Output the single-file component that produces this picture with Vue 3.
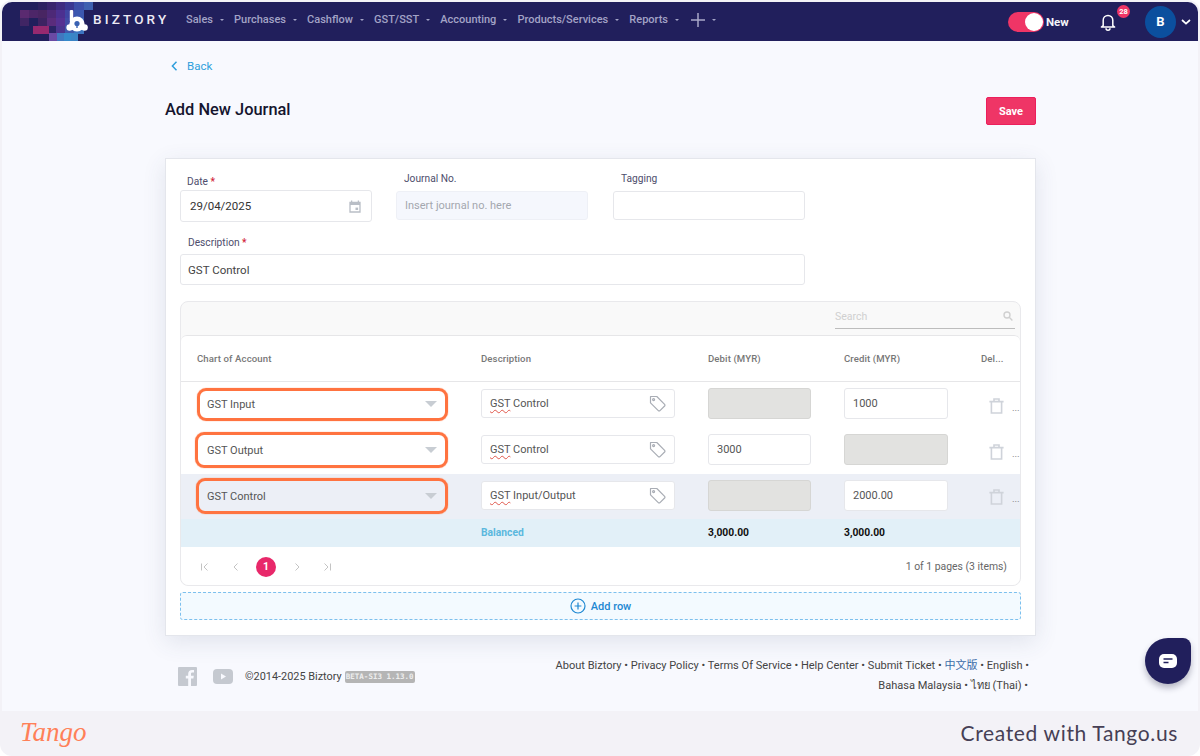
<script setup>
const navItems = ['Sales', 'Purchases', 'Cashflow', 'GST/SST', 'Accounting', 'Products/Services', 'Reports']

const rows = [
  { account: 'GST Input', rest: ' Control', debit: null, credit: '1000', frame: 'frame-a', tint: '' },
  { account: 'GST Output', rest: ' Control', debit: '3000', credit: null, frame: 'frame-b', tint: '' },
  { account: 'GST Control', rest: ' Input/Output', debit: null, credit: '2000.00', frame: 'frame-c', tint: 'row-tint' }
]

const tiles = [
  [38, 2, 9, '#2c2160'], [47, 2, 9, '#38246c'], [56, 2, 9, '#3e2b80'], [65, 2, 9, '#3a3792'], [74, 2, 10, '#3c4ea8'], [84, 2, 9, '#3f60b0'],
  [20, 10, 9, '#5a2a70'], [29, 10, 9, '#4d2668'], [38, 10, 9, '#482562'], [47, 10, 9, '#4d2977'], [56, 10, 9, '#4c3090'], [65, 10, 9, '#4045a2'], [74, 10, 10, '#3c58b0'],
  [20, 18, 9, '#402564'], [38, 18, 9, '#3d2362'], [47, 18, 9, '#5a2c7c'], [56, 18, 9, '#563193'], [65, 18, 9, '#424ca6'], [74, 18, 10, '#3b66b8'],
  [33, 26, 16, '#96296f'], [49, 26, 7, '#2a2466'], [56, 26, 9, '#4b358f'], [65, 26, 9, '#4059ad'], [74, 26, 10, '#3c74c0'],
  [49, 33, 8, '#6a4aa4'], [57, 33, 7, '#4078c0'], [64, 33, 7, '#3589ca'], [71, 33, 7, '#3a84c6']
]
</script>

<template>
  <div class="shot">
    <div class="screen">
      <header class="nav">
        <div class="brand">
          <svg class="mosaic" width="94" height="41" viewBox="0 0 94 41">
            <rect v-for="(t, i) in tiles" :key="i" :x="t[0]" :y="t[1]" :width="t[2]" height="8" :fill="t[3]" />
          </svg>
          <svg class="brand-mark" width="22" height="23" viewBox="0 0 22 23">
            <path d="M5.5 1.5 V11" stroke="#fff" stroke-width="3.4" stroke-linecap="round" fill="none" />
            <circle cx="11" cy="14" r="7.6" fill="#fff" />
            <circle cx="3.6" cy="17.5" r="3.2" fill="#fff" />
            <circle cx="18.6" cy="17.5" r="3.2" fill="#fff" />
            <circle cx="11" cy="13.5" r="2.6" fill="#3a62b2" />
            <path d="M11 13.5 V18" stroke="#3a62b2" stroke-width="1.4" />
          </svg>
          <span class="brand-name">BIZTORY</span>
        </div>
        <nav class="menu">
          <span v-for="item in navItems" :key="item" class="menu-item">{{ item }}<i class="caret"></i></span>
          <span class="menu-item menu-plus">
            <svg width="14" height="14" viewBox="0 0 14 14"><path d="M7 0 V14 M0 7 H14" stroke="#a9a9c9" stroke-width="1.5" /></svg>
            <i class="caret"></i>
          </span>
        </nav>
        <div class="nav-right">
          <div class="toggle"><span class="knob"></span></div>
          <span class="new">New</span>
          <div class="bell">
            <svg width="16" height="18" viewBox="0 0 16 18" fill="none" stroke="#fff" stroke-width="1.5" stroke-linejoin="round">
              <path d="M3.2 12.6 V7.2 a4.8 4.8 0 0 1 9.6 0 V12.6 L14.6 14 H1.4 Z" />
              <path d="M6 15.2 a2 2 0 0 0 4 0" />
            </svg>
            <span class="badge">28</span>
          </div>
          <div class="avatar">B</div>
          <svg class="chev" width="10" height="6" viewBox="0 0 10 6"><path d="M1 1 L5 4.6 L9 1" fill="none" stroke="#fff" stroke-width="1.7" /></svg>
        </div>
      </header>

      <main class="page">
        <a class="back">
          <svg width="7" height="10" viewBox="0 0 7 10"><path d="M5.5 .8 L1.4 5 L5.5 9.2" fill="none" stroke="#2f9fdc" stroke-width="1.5" /></svg>
          <span>Back</span>
        </a>
        <div class="title-row">
          <h1>Add New Journal</h1>
          <button class="save">Save</button>
        </div>

        <section class="card">
          <div class="form-row">
            <div class="field field-date">
              <label class="lbl lbl-date">Date <b>*</b></label>
              <div class="input input-date">
                <span>29/04/2025</span>
                <svg width="12" height="13" viewBox="0 0 12 13">
                  <path d="M1 2.4 H11 V12 H1 Z M2.6 .6 V2.4 M9.4 .6 V2.4" fill="none" stroke="#b9bec6" stroke-width="1.3" />
                  <path d="M1 3 H11 V5 H1 Z" fill="#b9bec6" />
                  <rect x="6.5" y="7.6" width="2.6" height="2.4" fill="#b9bec6" />
                </svg>
              </div>
            </div>
            <div class="field">
              <label class="lbl">Journal No.</label>
              <div class="input input-off">Insert journal no. here</div>
            </div>
            <div class="field field-tag">
              <label class="lbl">Tagging</label>
              <div class="input"></div>
            </div>
          </div>

          <div class="desc-block">
            <label class="lbl lbl-desc">Description <b>*</b></label>
            <div class="input input-desc">GST Control</div>
          </div>

          <div class="table">
            <div class="toolbar">
              <div class="search">
                <span>Search</span>
                <svg width="10" height="10" viewBox="0 0 10 10" fill="none" stroke="#d0d0d0" stroke-width="1.4">
                  <circle cx="4" cy="4" r="3" /><path d="M6.2 6.2 L9.4 9.4" />
                </svg>
              </div>
            </div>
            <div class="inner">
              <div class="grid-row head">
                <span>Chart of Account</span>
                <span>Description</span>
                <span>Debit (MYR)</span>
                <span>Credit (MYR)</span>
                <span>Del...</span>
              </div>
              <div v-for="r in rows" :key="r.account" class="grid-row body-row" :class="r.tint">
                <div class="cell">
                  <div class="select" :class="r.frame">
                    <span>{{ r.account }}</span>
                    <i class="tri"></i>
                  </div>
                </div>
                <div class="cell">
                  <div class="desc-input">
                    <span><span class="typo">GST</span>{{ r.rest }}</span>
                    <svg width="17" height="17" viewBox="0 0 17 17" fill="none" stroke="#a9adb5" stroke-width="1.2" stroke-linejoin="round">
                      <path d="M1.5 1.5 H7.8 L15.6 9.3 a1.2 1.2 0 0 1 0 1.7 L11 15.6 a1.2 1.2 0 0 1 -1.7 0 L1.5 7.8 Z" />
                      <circle cx="4.6" cy="4.6" r="1" />
                    </svg>
                  </div>
                </div>
                <div class="cell">
                  <div v-if="r.debit" class="num">{{ r.debit }}</div>
                  <div v-else class="num num-off"></div>
                </div>
                <div class="cell">
                  <div v-if="r.credit" class="num">{{ r.credit }}</div>
                  <div v-else class="num num-off"></div>
                </div>
                <div class="cell cell-del">
                  <svg width="15" height="16" viewBox="0 0 15 16" fill="none" stroke="#cfd3da" stroke-width="1.6">
                    <path d="M.4 3.6 H14.6 M2.4 3.6 V15 H12.6 V3.6 M5 3.6 V1 H10 V3.6" />
                  </svg>
                  <span class="dots">...</span>
                </div>
              </div>
              <div class="grid-row total">
                <span></span>
                <span class="balanced">Balanced</span>
                <span>3,000.00</span>
                <span>3,000.00</span>
                <span></span>
              </div>
              <div class="pager">
                <div class="pages">
                  <svg width="10" height="10" viewBox="0 0 10 10"><path d="M1.5 1.5 V8.5 M7.5 1.5 L4 5 L7.5 8.5" fill="none" stroke="#c4c4c4" stroke-width="1" /></svg>
                  <svg width="10" height="10" viewBox="0 0 10 10"><path d="M6.5 1.5 L3 5 L6.5 8.5" fill="none" stroke="#c4c4c4" stroke-width="1" /></svg>
                  <span class="current">1</span>
                  <svg width="10" height="10" viewBox="0 0 10 10"><path d="M3.5 1.5 L7 5 L3.5 8.5" fill="none" stroke="#c4c4c4" stroke-width="1" /></svg>
                  <svg width="10" height="10" viewBox="0 0 10 10"><path d="M8.5 1.5 V8.5 M2.5 1.5 L6 5 L2.5 8.5" fill="none" stroke="#c4c4c4" stroke-width="1" /></svg>
                </div>
                <span class="count">1 of 1 pages (3 items)</span>
              </div>
            </div>
          </div>

          <div class="add-row">
            <svg width="16" height="16" viewBox="0 0 16 16" fill="none" stroke="#1e88d2" stroke-width="1.2">
              <circle cx="8" cy="8" r="7" /><path d="M8 4.6 V11.4 M4.6 8 H11.4" />
            </svg>
            <span>Add row</span>
          </div>
        </section>

        <footer class="foot">
          <div class="foot-left">
            <svg width="19" height="19" viewBox="0 0 19 19">
              <rect width="19" height="19" rx="1" fill="#c5c9d0" />
              <path d="M13 19 V11.6 H15.4 L15.8 8.8 H13 V7 C13 6.2 13.3 5.6 14.4 5.6 H16 V3.1 C15.6 3 14.8 3 14 3 C11.8 3 10.2 4.3 10.2 6.8 V8.8 H7.8 V11.6 H10.2 V19 Z" fill="#f8f9fe" />
            </svg>
            <svg class="yt" width="20" height="15" viewBox="0 0 20 15">
              <rect width="20" height="15" rx="4" fill="#c5c9d0" />
              <path d="M8 4.4 L13 7.5 L8 10.6 Z" fill="#f8f9fe" />
            </svg>
            <span class="copy">©2014-2025 Biztory</span>
            <span class="beta">BETA-SI3 1.13.0</span>
          </div>
          <div class="links">
            <div>About Biztory • Privacy Policy • Terms Of Service • Help Center • Submit Ticket • <span class="cn">中文版</span> • English •</div>
            <div class="links-2">Bahasa Malaysia • ไทย (Thai) •</div>
          </div>
        </footer>
      </main>
    </div>

    <div class="tango">
      <span class="tango-logo">Tango</span>
      <span class="tango-note">Created with Tango.us</span>
    </div>

    <div class="chat">
      <svg width="18" height="15" viewBox="0 0 18 15">
        <rect width="18" height="14" rx="5" fill="#fff" />
        <path d="M4.5 5 H13.5 M4.5 8.6 H9.5" stroke="#211f5c" stroke-width="1.5" />
      </svg>
    </div>
  </div>
</template>

<style>
html, body { margin: 0; background: #fff; }
</style>

<style scoped>
* { box-sizing: border-box; }
.shot {
  position: relative;
  width: 1200px;
  height: 756px;
  overflow: hidden;
  display: flex;
  flex-direction: column;
  background: #f3f2f7;
  border-radius: 12px;
  font-family: Roboto, "Noto Sans", sans-serif;
  color: #444;
}
.screen {
  margin: 2px 2px 0;
  height: 709px;
  flex: none;
  background: #f8f9fe;
  border-radius: 10px 10px 0 0;
  overflow: hidden;
}

/* nav */
.nav {
  height: 39px;
  background: #211f5c;
  display: flex;
  align-items: center;
  position: relative;
}
.brand { width: 184px; height: 39px; display: flex; align-items: center; position: relative; flex: none; }
.mosaic { position: absolute; left: -2px; top: -2px; }
.brand-mark { position: absolute; left: 64px; top: 8px; }
.brand-name {
  position: absolute;
  left: 91px;
  top: 9px;
  font-size: 13.5px;
  line-height: 16px;
  font-weight: 500;
  letter-spacing: 3.15px;
  color: #eceaf4;
}
.menu { display: flex; align-items: center; gap: 10.1px; margin-top: -4px; }
.menu-item {
  display: inline-flex;
  align-items: center;
  font-size: 11px;
  font-weight: 500;
  color: #a3a3c6;
  white-space: nowrap;
}
.caret {
  width: 0;
  height: 0;
  margin-left: 7px;
  border-left: 2.5px solid transparent;
  border-right: 2.5px solid transparent;
  border-top: 2.5px solid #a3a3c6;
}
.menu-plus { margin-left: 2px; }
.nav-right { margin-left: auto; display: flex; align-items: center; height: 39px; }
.toggle {
  width: 36px;
  height: 20px;
  border-radius: 10px;
  background: #ef3566;
  position: relative;
  margin-right: 2px;
}
.knob {
  position: absolute;
  right: 1px;
  top: 1px;
  width: 18px;
  height: 18px;
  border-radius: 50%;
  background: #fff;
}
.new { font-size: 11.5px; font-weight: 700; color: #f4f4f8; width: 54px; }
.bell { position: relative; width: 45px; height: 20px; margin-top: -2px; }
.bell svg { display: block; margin-top: 2px; }
.badge {
  position: absolute;
  left: 17px;
  top: -6px;
  width: 13px;
  height: 13px;
  border-radius: 50%;
  background: #ef3566;
  color: #fff;
  font-size: 7.5px;
  font-weight: 700;
  line-height: 13px;
  text-align: center;
}
.avatar {
  width: 31px;
  height: 32px;
  border-radius: 50%;
  background: #0b4f9e;
  color: #fff;
  font-size: 13px;
  font-weight: 700;
  line-height: 32px;
  text-align: center;
}
.chev { margin: 0 7px 0 5px; }

/* page */
.page { width: 871px; margin-left: 163px; }
.back {
  display: flex;
  align-items: center;
  gap: 9px;
  padding: 17px 0 0 6px;
  height: 32px;
  font-size: 11.5px;
  color: #2f9fdc;
}
.title-row {
  display: flex;
  justify-content: space-between;
  align-items: flex-start;
  height: 85px;
  padding-top: 24px;
}
h1 { margin: 1px 0 0; font-size: 16.4px; line-height: 24px; font-weight: 500; color: #15152e; }
.save {
  width: 50px;
  height: 28px;
  border: 1px solid #ec1f5c;
  border-radius: 2px;
  background: #ef3566;
  color: #fff;
  font-family: inherit;
  font-size: 11px;
  font-weight: 700;
  padding: 0;
}

.card {
  height: 478px;
  border: 1px solid #e4e6ec;
  background: #fff;
  box-shadow: 0 6px 22px rgba(60, 70, 110, .12);
  padding: 13px 14px 0;
}
.form-row { display: flex; align-items: flex-start; height: 50px; }
.field { width: 192px; margin-right: 25px; }
.field-date { margin-right: 24px; padding-top: 3px; }
.field-tag { margin-right: 0; }
.lbl {
  display: block;
  height: 14px;
  line-height: 14px;
  font-size: 10.2px;
  color: #4d4d6c;
  padding-left: 8px;
  margin-bottom: 5px;
}
.lbl b { color: #d21f3c; font-weight: 500; }
.lbl-date { padding-left: 7px; margin-bottom: 1px; }
.lbl-desc { padding-left: 8px; margin-bottom: 4px; }
.input {
  height: 29px;
  border: 1px solid #e6e7eb;
  border-radius: 3px;
  background: #fff;
  font-size: 11.5px;
  line-height: 27px;
  padding: 0 8px;
  color: #444;
}
.input-date {
  height: 32px;
  color: #333;
  padding: 0 10px 0 9px;
  display: flex;
  align-items: center;
  justify-content: space-between;
}
.input-off { background: #f5f7fd; border-color: #eef0f6; color: #a4a7af; font-size: 11px; }
.desc-block { margin-top: 14px; }
.input-desc { width: 625px; height: 31px; line-height: 30px; padding-left: 7px; color: #444; }

/* table */
.table {
  margin-top: 16px;
  height: 285px;
  border: 1px solid #e9e9ec;
  border-radius: 8px;
  background: #f9f9f9;
}
.toolbar { height: 33px; display: flex; justify-content: flex-end; padding: 6px 5px 0 0; }
.search {
  width: 180px;
  height: 21px;
  border-bottom: 1px solid #bdbdbd;
  display: flex;
  align-items: center;
  justify-content: space-between;
  font-size: 10.5px;
  color: #d0d0d0;
  padding: 0 2px 4px 0;
}
.inner {
  height: 250px;
  border-top: 1px solid #e6e6e8;
  border-radius: 6px 6px 8px 8px;
  background: #fff;
}
.grid-row { display: grid; grid-template-columns: 284px 227px 136px 137px 55px; }
.grid-row > * { padding-left: 16px; }
.head {
  height: 46px;
  align-items: center;
  border-bottom: 1px solid #e6e6e8;
  font-size: 9.6px;
  font-weight: 500;
  color: #777;
  letter-spacing: .1px;
  white-space: nowrap;
}
.body-row { height: 46px; align-items: center; }
.row-tint { background: #eceff6; height: 45px; }
.cell { display: flex; align-items: center; }
.select {
  flex: none;
  display: flex;
  align-items: center;
  justify-content: space-between;
  border: 3px solid #ff7340;
  box-shadow: 0 0 1px #ff7340;
  border-radius: 9px;
  font-size: 11px;
  color: #555;
  padding: 0 8px 0 7px;
}
.frame-a { width: 251px; height: 33px; margin-top: -2px; }
.frame-b { width: 253px; height: 36px; margin-top: -2px; margin-left: -2px; padding-left: 9px; }
.frame-c { width: 252px; height: 36px; margin-top: -1px; margin-left: -1px; padding-left: 8px; }
.tri {
  width: 0;
  height: 0;
  border-left: 6.5px solid transparent;
  border-right: 6.5px solid transparent;
  border-top: 6px solid #c8cdd3;
}
.desc-input {
  width: 194px;
  height: 29px;
  margin-top: -3px;
  border: 1px solid #e6e7eb;
  border-radius: 3px;
  background: #fff;
  display: flex;
  align-items: center;
  justify-content: space-between;
  padding: 0 8px;
  font-size: 11px;
  color: #555;
}
.typo { text-decoration: underline wavy #e0584c 1px; text-underline-offset: 2px; }
.num {
  width: 103px;
  height: 31px;
  margin-top: -3px;
  border: 1px solid #e6e7eb;
  border-radius: 3px;
  background: #fff;
  font-size: 11px;
  line-height: 29px;
  padding-left: 8px;
  color: #555;
}
.row-tint .num { margin-top: -2px; }
.cell:nth-child(4) .num { width: 104px; }
.num-off { background: #e2e2e0; border: 1.5px solid #d6d6d4; }
.cell-del { gap: 8px; padding-left: 24px !important; }
.cell-del svg { flex: none; margin-top: 1px; }
.dots { font-size: 9px; font-family: "Liberation Sans", sans-serif; color: #888; margin-top: 5px; }
.total {
  height: 28px;
  align-items: center;
  background: #e2f0f8;
  font-size: 10.3px;
  font-weight: 700;
  color: #111;
  padding-bottom: 2px;
}
.balanced { color: #5bb8de; }
.pager {
  height: 37px;
  display: flex;
  align-items: center;
  justify-content: space-between;
  padding: 2px 13px 0 19px;
}
.pages { display: flex; align-items: center; }
.pages svg:nth-child(1) { margin-right: 21px; }
.pages svg:nth-child(2) { margin-right: 15px; }
.pages svg:nth-child(4) { margin: 0 20px 0 16px; }
.current {
  width: 20px;
  height: 20px;
  border-radius: 50%;
  background: #e8286a;
  color: #fff;
  font-size: 10.5px;
  font-weight: 700;
  line-height: 20px;
  text-align: center;
}
.count { font-size: 10.4px; color: #666; }
.add-row {
  margin-top: 6px;
  height: 28px;
  border: 1px dashed #7cc0ee;
  border-radius: 3px;
  background: #f3faff;
  display: flex;
  align-items: center;
  justify-content: center;
  gap: 5px;
  color: #1e88d2;
  font-size: 11px;
  font-weight: 500;
}

/* footer */
.foot { display: flex; justify-content: space-between; padding: 20px 7px 0 13px; }
.foot-left { display: flex; align-items: center; height: 23px; margin-top: 9px; }
.yt { margin-left: 16px; }
.copy { margin-left: 12px; font-size: 10.9px; color: #444; white-space: nowrap; }
.beta {
  margin-left: 3px;
  width: 70px;
  height: 12px;
  border-radius: 2px;
  background: #b5b5b5;
  color: #eee;
  font-family: "DejaVu Sans Mono", "Liberation Mono", monospace;
  font-size: 7.5px;
  font-weight: 700;
  line-height: 12px;
  text-align: center;
  white-space: nowrap;
}
.links { text-align: right; font-size: 11.05px; line-height: 20px; color: #444; white-space: nowrap; }
.cn { color: #3a6ca8; font-family: Roboto, "Noto Sans CJK SC", sans-serif; }
.links-2 { padding-right: 1px; }

/* tango bar */
.tango { flex: 1; display: flex; align-items: center; justify-content: space-between; padding: 0 22px 3px 20px; }
.tango-logo {
  font-family: "Liberation Serif", serif;
  font-style: italic;
  font-size: 27px;
  line-height: 40px;
  color: #ff8058;
}
.tango-note { font-family: Lato, sans-serif; font-size: 21px; letter-spacing: .64px; color: #463f55; }

.chat {
  position: absolute;
  left: 1145px;
  top: 638px;
  width: 46px;
  height: 46px;
  border-radius: 50% 8px 50% 50%;
  background: #211f5c;
  box-shadow: 0 4px 6px rgba(30, 30, 60, .3);
  display: flex;
  align-items: center;
  justify-content: center;
}
</style>
